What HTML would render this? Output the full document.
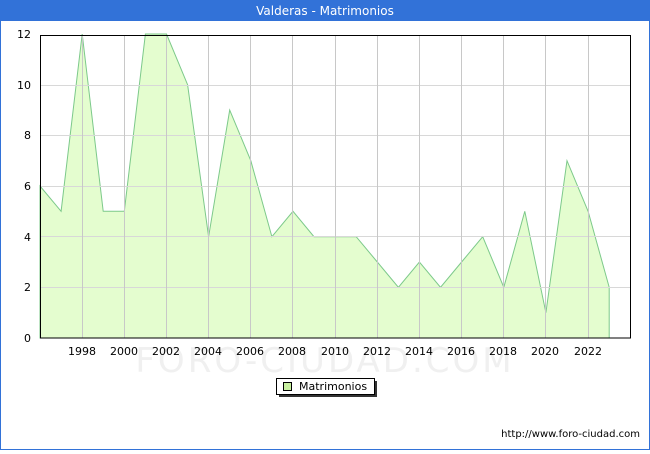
<!DOCTYPE html>
<html><head><style>
body{margin:0;width:650px;height:450px;overflow:hidden;background:#fff;font-family:"DejaVu Sans","Liberation Sans",sans-serif;}
</style></head><body>
<svg width="650" height="450" xmlns="http://www.w3.org/2000/svg" font-family="DejaVu Sans, Liberation Sans, sans-serif">
<rect x="0.5" y="0.5" width="649" height="449" fill="#fff" stroke="#3272d8"/>
<rect x="0" y="0" width="650" height="21" fill="#3272d8"/>
<text x="325" y="15" text-anchor="middle" font-size="12" fill="#fff">Valderas - Matrimonios</text>
<polygon fill="#e4fdcf" stroke="#7cc98a" stroke-width="1" points="40,338 40,186 61.1,211.3 82.2,34 103.2,211.3 124.3,211.3 145.4,34 166.5,34 187.6,84.7 208.6,236.7 229.7,110 250.8,160.7 271.9,236.7 293,211.3 314,236.7 335.1,236.7 356.2,236.7 377.3,262 398.4,287.3 419.4,262 440.5,287.3 461.6,262 482.7,236.7 503.8,287.3 524.8,211.3 545.9,312.7 567,160.7 588.1,211.3 609.2,287.3 609.2,338"/>
<g stroke="#d8d8d8" stroke-width="1">
<line x1="40" y1="287.5" x2="630" y2="287.5"/><line x1="40" y1="236.5" x2="630" y2="236.5"/>
<line x1="40" y1="186.5" x2="630" y2="186.5"/><line x1="40" y1="135.5" x2="630" y2="135.5"/>
<line x1="40" y1="85.5" x2="630" y2="85.5"/>
</g>
<g stroke="#c8c8c8" stroke-width="1">
<line x1="82.5" y1="35" x2="82.5" y2="338"/><line x1="124.5" y1="35" x2="124.5" y2="338"/>
<line x1="166.5" y1="35" x2="166.5" y2="338"/><line x1="208.5" y1="35" x2="208.5" y2="338"/>
<line x1="250.5" y1="35" x2="250.5" y2="338"/><line x1="292.5" y1="35" x2="292.5" y2="338"/>
<line x1="335.5" y1="35" x2="335.5" y2="338"/><line x1="377.5" y1="35" x2="377.5" y2="338"/>
<line x1="419.5" y1="35" x2="419.5" y2="338"/><line x1="461.5" y1="35" x2="461.5" y2="338"/>
<line x1="503.5" y1="35" x2="503.5" y2="338"/><line x1="545.5" y1="35" x2="545.5" y2="338"/>
<line x1="588.5" y1="35" x2="588.5" y2="338"/>
</g>
<rect x="40.5" y="35.5" width="590" height="302.5" fill="none" stroke="#000"/>
<text x="325" y="372" text-anchor="middle" font-size="34" fill="#f0f0f0" letter-spacing="3">FORO-CIUDAD.COM</text>
<g font-size="11" fill="#000" text-anchor="end">
<text x="31" y="342">0</text><text x="31" y="291">2</text><text x="31" y="241">4</text>
<text x="31" y="190">6</text><text x="31" y="139">8</text><text x="31" y="89">10</text><text x="31" y="38">12</text>
</g>
<g font-size="11" fill="#000" text-anchor="middle">
<text x="82" y="355">1998</text><text x="124" y="355">2000</text><text x="166" y="355">2002</text>
<text x="208" y="355">2004</text><text x="250" y="355">2006</text><text x="292" y="355">2008</text>
<text x="335" y="355">2010</text><text x="377" y="355">2012</text><text x="419" y="355">2014</text>
<text x="461" y="355">2016</text><text x="503" y="355">2018</text><text x="545" y="355">2020</text>
<text x="588" y="355">2022</text>
</g>
<rect x="279" y="381" width="98" height="16" fill="#333"/>
<rect x="276.5" y="378.5" width="98" height="16" fill="#fff" stroke="#000"/>
<rect x="283.5" y="382.5" width="8" height="8" fill="#c8f0a0" stroke="#000"/>
<text x="299" y="390" font-size="11">Matrimonios</text>
<text x="640" y="437" text-anchor="end" font-size="10" fill="#000">http://www.foro-ciudad.com</text>
</svg>
</body></html>
